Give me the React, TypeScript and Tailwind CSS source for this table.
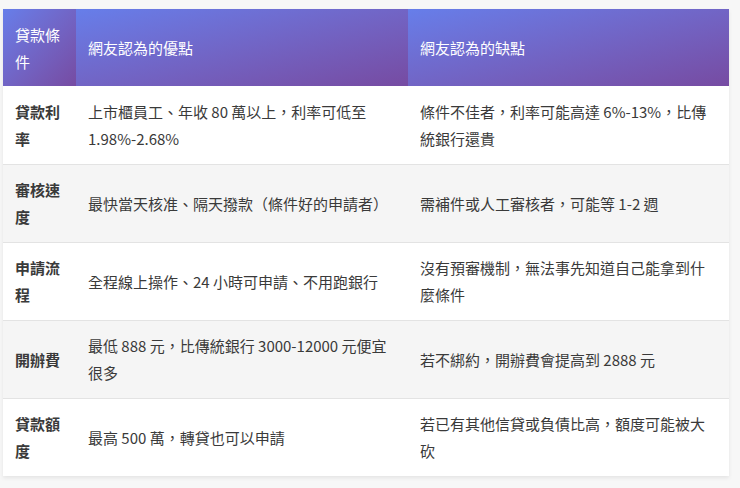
const rows = [
  {
    term: "貸款利率",
    pro: "上市櫃員工、年收 80 萬以上，利率可低至 1.98%-2.68%",
    con: "條件不佳者，利率可能高達 6%-13%，比傳統銀行還貴",
  },
  {
    term: "審核速度",
    pro: "最快當天核准、隔天撥款（條件好的申請者）",
    con: "需補件或人工審核者，可能等 1-2 週",
  },
  {
    term: "申請流程",
    pro: "全程線上操作、24 小時可申請、不用跑銀行",
    con: "沒有預審機制，無法事先知道自己能拿到什麼條件",
  },
  {
    term: "開辦費",
    pro: "最低 888 元，比傳統銀行 3000-12000 元便宜很多",
    con: "若不綁約，開辦費會提高到 2888 元",
  },
  {
    term: "貸款額度",
    pro: "最高 500 萬，轉貸也可以申請",
    con: "若已有其他信貸或負債比高，額度可能被大砍",
  },
];

const App = () => {
  return (
    <div
      className="min-h-[488px] w-[740px] bg-[#f7f7f7] pt-[9px] pl-[3px]"
      style={{ fontFamily: '"Noto Sans CJK TC", "Noto Sans", sans-serif' }}
    >
      <table className="w-[726px] table-fixed border-collapse bg-white text-[15px] leading-[27px] text-[#3a3a3a] shadow-[0_2px_4px_rgba(0,0,0,0.08)]">
        <colgroup>
          <col className="w-[73px]" />
          <col className="w-[332px]" />
          <col className="w-[321px]" />
        </colgroup>
        <thead>
          <tr className="h-[77px] text-white">
            <th className="bg-gradient-to-br from-[#667eea] to-[#764ba2] px-3 text-left align-middle font-normal">
              貸款條件
            </th>
            <th className="bg-gradient-to-br from-[#667eea] to-[#764ba2] px-3 text-left align-middle font-normal">
              網友認為的優點
            </th>
            <th className="bg-gradient-to-br from-[#667eea] to-[#764ba2] px-3 text-left align-middle font-normal">
              網友認為的缺點
            </th>
          </tr>
        </thead>
        <tbody>
          {rows.map((r, i) => (
            <tr
              key={r.term}
              className={`h-[78px] ${i < rows.length - 1 ? "border-b border-[#e3e3e3]" : ""} ${i % 2 === 1 ? "bg-[#f5f5f5]" : "bg-white"}`}
            >
              <td className="px-3 py-[10px] align-middle font-bold">{r.term}</td>
              <td className="px-3 py-[10px] align-middle">{r.pro}</td>
              <td className="px-3 py-[10px] align-middle">{r.con}</td>
            </tr>
          ))}
        </tbody>
      </table>
    </div>
  );
};

export default App;
